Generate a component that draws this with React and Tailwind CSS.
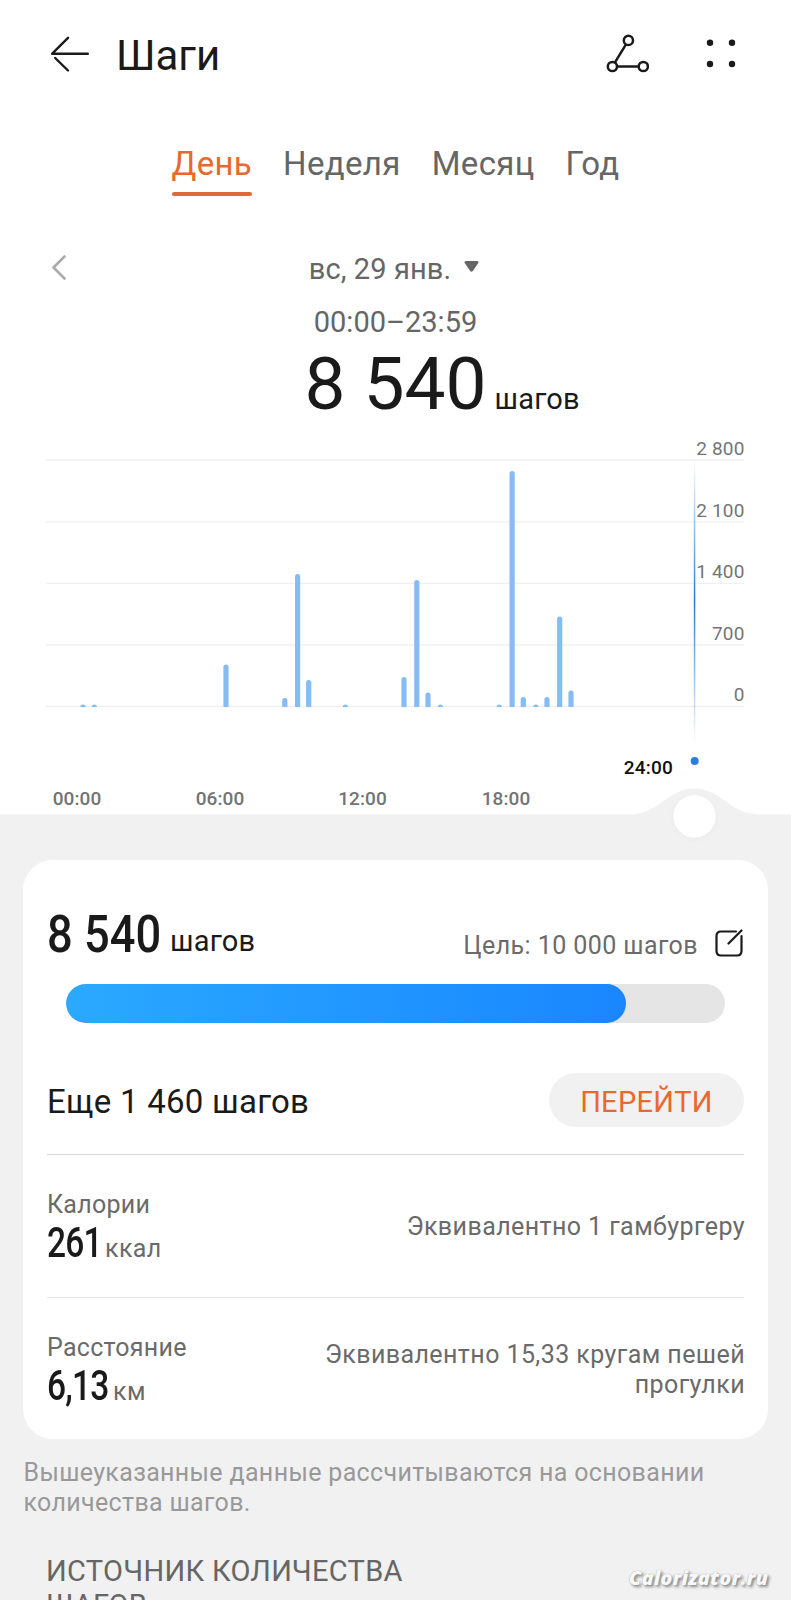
import React from 'react';

const tabs = ['День', 'Неделя', 'Месяц', 'Год'];

const gridLines = [
  { label: '2 800', y: 36 },
  { label: '2 100', y: 97.9 },
  { label: '1 400', y: 159.3 },
  { label: '700', y: 221 },
  { label: '0', y: 282.5 },
];

const hours = [
  { label: '00:00', x: 77 },
  { label: '06:00', x: 220 },
  { label: '12:00', x: 362.5 },
  { label: '18:00', x: 506 },
];

const bars = [
  { x: 83, height: 2.5 },
  { x: 94.3, height: 2.5 },
  { x: 226, height: 42.5 },
  { x: 284.8, height: 9 },
  { x: 297.6, height: 133 },
  { x: 308.7, height: 27 },
  { x: 345.3, height: 2.5 },
  { x: 404, height: 30 },
  { x: 416.8, height: 127 },
  { x: 428, height: 14.5 },
  { x: 440.4, height: 2.5 },
  { x: 499.2, height: 2.5 },
  { x: 512.1, height: 236 },
  { x: 523.3, height: 10 },
  { x: 535.8, height: 2.5 },
  { x: 547, height: 10 },
  { x: 559.7, height: 90.5 },
  { x: 571, height: 16.5 },
];

const barPath = ({ x, height }) => {
  const bottom = 282.9;
  const top = bottom - height;
  const r = Math.min(2.6, height);
  return `M${x - 2.6} ${bottom}V${top + r}Q${x - 2.6} ${top} ${x} ${top}T${x + 2.6} ${top + r}V${bottom}Z`;
};

const Header = () => (
  <header className="flex h-[108px] items-center pl-[50px] pr-[53px] text-[#1a1a1a]">
    <svg className="h-10 w-10" viewBox="0 0 40 40" fill="none" stroke="currentColor" strokeWidth="2.4" strokeLinecap="round" strokeLinejoin="round">
      <path d="M37.8 19.7H2.2L18 3.8M5.2 24L18 36.5" />
    </svg>
    <h1 className="ml-[26px] pt-[3px] text-[42px] leading-[50px]">Шаги</h1>
    <svg className="ml-auto h-11 w-11" viewBox="0 0 44 44" fill="none" stroke="currentColor" strokeWidth="2.5">
      <circle cx="23.4" cy="8.4" r="4.6" />
      <circle cx="7.4" cy="34.5" r="4.6" />
      <circle cx="38.3" cy="34.5" r="4.6" />
      <path d="M21 12.4L9.8 30.6M12 34.5H33.7" />
    </svg>
    <svg className="ml-[53px] h-9 w-9" viewBox="0 0 36 36" fill="currentColor">
      <circle cx="8" cy="6.8" r="3.2" />
      <circle cx="30" cy="6.8" r="3.2" />
      <circle cx="8" cy="28" r="3.2" />
      <circle cx="30" cy="28" r="3.2" />
    </svg>
  </header>
);

const Tabs = () => (
  <nav className="mt-[36px] flex justify-center gap-[31px] text-[33px] leading-10 tracking-[.32px] text-[#666]">
    {tabs.map((tab, i) => (
      <div key={tab} className={i === 0 ? 'text-[#e8682e]' : ''}>
        {tab}
        {i === 0 && <div className="mt-2 mb-px h-1 rounded-full bg-[#de6a3a]" />}
      </div>
    ))}
  </nav>
);

const StepsChart = () => (
  <svg className="block h-[420px] w-full" viewBox="0 0 791 420">
    <defs>
      <linearGradient id="cursor" x1="0" y1="0" x2="0" y2="1">
        <stop offset="0" stopColor="#2f86d8" stopOpacity="0" />
        <stop offset="0.5" stopColor="#2478cc" />
        <stop offset="1" stopColor="#2f86d8" stopOpacity="0" />
      </linearGradient>
      <filter id="knob" x="-30%" y="-30%" width="160%" height="160%">
        <feDropShadow dx="0" dy="1" stdDeviation="2.5" floodColor="#000" floodOpacity="0.03" />
      </filter>
    </defs>

    <path d="M0 0H791V390.5H760C728 390 722 364.5 694.5 364.5S661 390 629 390.5H0Z" fill="#fff" />

    {gridLines.map(({ label, y }) => (
      <g key={label}>
        <path d={`M46 ${y}H744`} stroke="#f0f0f0" strokeWidth="1.3" />
        <text x="744.5" y={y - 5.4} textAnchor="end" fontSize="19" letterSpacing=".15" fill="#757575">{label}</text>
      </g>
    ))}

    {bars.map((bar) => (
      <path key={bar.x} d={barPath(bar)} fill="#86bbf3" />
    ))}

    <rect x="693.8" y="34" width="1.5" height="286" fill="url(#cursor)" />
    <circle cx="694.7" cy="337" r="4" fill="#2a7fe0" />
    <text x="648.4" y="350" textAnchor="middle" fontSize="19" letterSpacing=".2" fontWeight="500" fill="#111">24:00</text>

    {hours.map(({ label, x }) => (
      <text key={label} x={x} y="381.4" textAnchor="middle" fontSize="19" letterSpacing=".1" fontWeight="500" fill="#737373">{label}</text>
    ))}

    <circle cx="694.5" cy="392.3" r="21.2" fill="#fff" filter="url(#knob)" />
  </svg>
);

const Metric = ({ label, value, unit, note }) => (
  <div className="flex h-[142px] items-center justify-between text-[25px] leading-[30px] tracking-[.28px] text-[#6a6a6a]">
    <div>
      <div className="pt-px">{label}</div>
      <div className="flex h-[44px] items-baseline leading-[44px]">
        {value}
        <span className="ml-1.5 tracking-[.4px]">{unit}</span>
      </div>
    </div>
    <div className="-mr-px w-[440px] pt-0.5 text-right tracking-[.42px]">{note}</div>
  </div>
);

export default function App() {
  return (
    <div className="h-[1600px] w-[791px] overflow-hidden bg-[#f1f1f1] font-['Roboto',sans-serif] text-[#1a1a1a]">
      <div className="h-[424px] bg-white">
        <Header />
        <Tabs />

        <div className="mt-[52px] grid h-10 grid-cols-[1fr_auto_1fr] items-center pl-[50px] pr-[53px] text-[29px] leading-10 text-[#666]">
          <svg className="h-7 w-4" viewBox="0 0 16 28" fill="none" stroke="#aaa" strokeWidth="2.6" strokeLinecap="round" strokeLinejoin="round">
            <path d="M14.5 1.5L3.5 12.5L14.5 23.5" />
          </svg>
          <div className="flex items-center gap-[13px] tracking-[.1px]">
            вс, 29 янв.
            <svg className="mb-1.5 h-[11px] w-[15px]" viewBox="0 0 15 11" fill="#666">
              <path d="M2 0H13Q15.5 .8 14 2.5L9 9.8Q7.5 11.5 6 9.8L1 2.5Q-.5 .8 2 0Z" />
            </svg>
          </div>
        </div>
        <div className="mt-[13px] text-center text-[29px] leading-10 text-[#666]">00:00–23:59</div>
        <div className="mt-0.5 grid grid-cols-[1fr_auto_1fr] items-baseline leading-[80px]">
          <span />
          <span className="text-[73px]">8 540</span>
          <span className="ml-2 text-[29px] tracking-[.2px]">шагов</span>
        </div>
      </div>

      <StepsChart />

      <section className="mx-auto mt-4 h-[579px] w-[745px] rounded-[30px] bg-white px-6">
        <div className="flex h-[104px] items-baseline pt-[44px] leading-[60px]">
          <span className="w-[116px] translate-y-px">
            <span className="inline-block origin-left scale-x-[.87] whitespace-nowrap text-[52px] font-medium">8 540</span>
          </span>
          <span className="ml-[7px] text-[29px] tracking-[.2px]">шагов</span>
          <span className="ml-auto translate-y-[3px] text-[25px] tracking-[.42px] text-[#6a6a6a]">Цель: 10 000 шагов</span>
          <svg className="ml-[17px] mr-px h-7 w-7 translate-y-[6px]" viewBox="0 0 28 28" fill="none" stroke="#1a1a1a" strokeWidth="2.2" strokeLinecap="round">
            <path d="M21 2.5H6Q1.5 2.5 1.5 7V22Q1.5 26.5 6 26.5H22Q26.5 26.5 26.5 22V7M13.5 14.5L26.5 1.5" />
          </svg>
        </div>

        <div className="ml-[18.5px] mr-[19.5px] mt-5 h-[39px] overflow-hidden rounded-full bg-[#e5e5e5]">
          <div className="h-full w-[85%] rounded-full bg-linear-to-r from-[#2ba9ff] to-[#1a86ff]" />
        </div>

        <div className="mt-[50px] flex h-[54px] items-center justify-between">
          <span className="pt-1 text-[33px] tracking-[.25px]">Еще 1 460 шагов</span>
          <button className="h-[54px] w-[195px] rounded-full bg-[#f1f1f1] pt-1.5 text-[29px] tracking-[.3px] text-[#e8682e]">ПЕРЕЙТИ</button>
        </div>

        <div className="mt-[27px] h-px bg-[#d9d9d9]" />
        <Metric
          label="Калории"
          value={
            <span className="w-[52px] text-[#1a1a1a]">
              <span className="inline-block origin-left scale-x-[.78] text-[43px] font-medium tracking-[-1px]">261</span>
            </span>
          }
          unit="ккал"
          note="Эквивалентно 1 гамбургеру"
        />
        <div className="h-px bg-[#e2e2e2]" />
        <Metric
          label="Расстояние"
          value={
            <span className="w-[60px] text-[#1a1a1a]">
              <span className="inline-block origin-left scale-x-[.78] text-[43px] font-medium tracking-[-1px]">6,13</span>
            </span>
          }
          unit="км"
          note="Эквивалентно 15,33 кругам пешей прогулки"
        />
      </section>

      <p className="ml-[23.5px] mt-[19px] w-[710px] text-[25px] leading-[30px] tracking-[.34px] text-[#999]">
        Вышеуказанные данные рассчитываются на основании количества шагов.
      </p>

      <div className="mt-[36px] flex items-start justify-between pl-[46px] pr-[23px]">
        <h2 className="w-[380px] text-[29px] leading-[34px] tracking-[.32px] text-[#666]">ИСТОЧНИК КОЛИЧЕСТВА ШАГОВ</h2>
        <span className="mt-[7px] font-['Open_Sans',sans-serif] text-[20px] leading-[34px] font-extrabold italic tracking-[.1px] text-[#f8f8f8] [text-shadow:2px_2px_3px_#888,0_0_1px_#999]">
          Calorizator.ru
        </span>
      </div>
    </div>
  );
}
